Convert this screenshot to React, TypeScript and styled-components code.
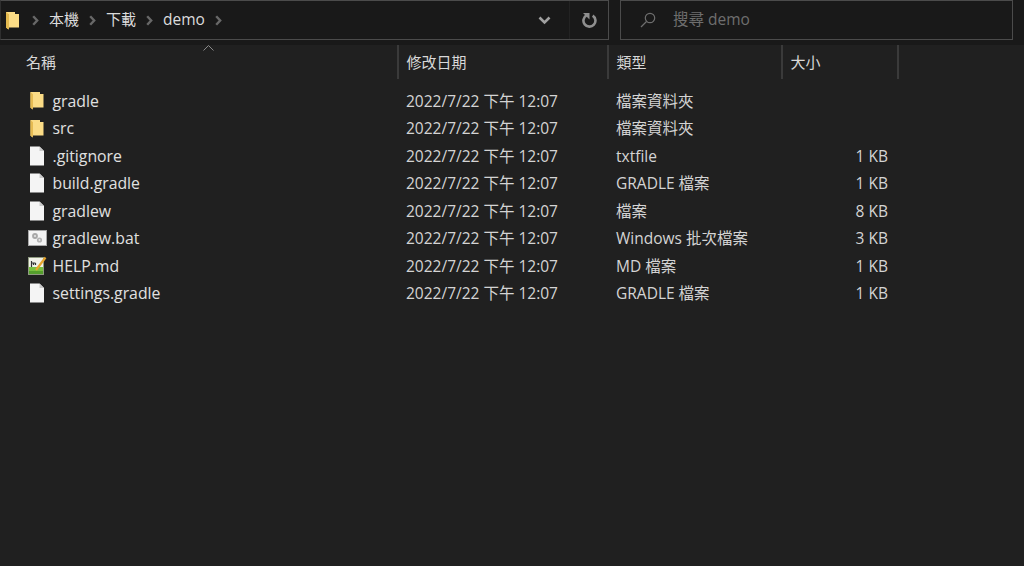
import styled, { createGlobalStyle } from 'styled-components';

const GlobalStyle = createGlobalStyle`
  html, body {
    margin: 0;
    padding: 0;
    height: 100%;
    background: #202020;
  }
  body {
    font-family: "Open Sans", "Noto Sans CJK TC", sans-serif;
    overflow: hidden;
  }
`;

const files = [
  { name: 'gradle', type: '檔案資料夾', size: '', icon: 'folder' },
  { name: 'src', type: '檔案資料夾', size: '', icon: 'folder' },
  { name: '.gitignore', type: 'txtfile', size: '1 KB', icon: 'file' },
  { name: 'build.gradle', type: 'GRADLE 檔案', size: '1 KB', icon: 'file' },
  { name: 'gradlew', type: '檔案', size: '8 KB', icon: 'file' },
  { name: 'gradlew.bat', type: 'Windows 批次檔案', size: '3 KB', icon: 'bat' },
  { name: 'HELP.md', type: 'MD 檔案', size: '1 KB', icon: 'md' },
  { name: 'settings.gradle', type: 'GRADLE 檔案', size: '1 KB', icon: 'file' },
];

function FolderIcon() {
  return (
    <svg width="14" height="19" viewBox="0 0 14 19">
      <path d="M.5 1h9.5v2h3.5v13.5H3l-.5 2L.5 16.5z" fill="#fbdc86" />
      <path d="M.5 1l2.5 2.2v13.3l-.5 2-2-2z" fill="#e6bb52" />
    </svg>
  );
}

function FileIcon() {
  return (
    <svg width="16" height="20" viewBox="0 0 16 20">
      <path d="M1 .5h9.5L15 5v14.5H1z" fill="#f4f4f4" />
      <path d="M10.5.5V5H15z" fill="#c9c9c9" />
    </svg>
  );
}

function BatIcon() {
  return (
    <svg width="19" height="16" viewBox="0 0 19 16">
      <rect x="0" y="0" width="19" height="16" fill="#a8a8a8" />
      <rect x="1" y="1" width="17" height="14" fill="#f4f4f4" />
      <circle cx="7" cy="6" r="2.9" fill="#a8a8a8" />
      <circle cx="7" cy="6" r="1" fill="#e8e8e8" />
      <circle cx="11.5" cy="10" r="2.6" fill="#b4b4b4" />
      <circle cx="11.5" cy="10" r=".9" fill="#e8e8e8" />
    </svg>
  );
}

function MdIcon() {
  return (
    <svg width="19" height="19" viewBox="0 0 19 19">
      <rect x="0" y="1" width="16" height="18" fill="#8f9a80" />
      <rect x="1" y="2" width="14" height="9" fill="#f1f1e8" />
      <rect x="1" y="11" width="14" height="7" fill="#78c040" />
      <rect x="1" y="15" width="14" height="3" fill="#549e2c" />
      <path d="M3.5 5v6M3.5 7h4M5.5 7v2M7.5 7v2" stroke="#333" strokeWidth="1.2" fill="none" />
      <path d="M8 14L17.5 1.5" stroke="#e8a52c" strokeWidth="2.2" />
    </svg>
  );
}

const icons = {
  folder: <FolderIcon />,
  file: <FileIcon />,
  bat: <BatIcon />,
  md: <MdIcon />,
};

function Chevron() {
  return (
    <svg width="7" height="11" viewBox="0 0 7 11">
      <path d="M1.2 1.2l4 4.3-4 4.3" stroke="#686868" strokeWidth="2.4" fill="none" />
    </svg>
  );
}

function App() {
  const rows = files.map(({ name, type, size, icon }) => (
    <Row key={name}>
      <NameCell>
        <IconSlot>{icons[icon]}</IconSlot>
        {name}
      </NameCell>
      <Cell>2022/7/22 下午 12:07</Cell>
      <TypeCell>{type}</TypeCell>
      <SizeCell>{size}</SizeCell>
    </Row>
  ));

  return (
    <>
      <GlobalStyle />
      <Toolbar>
        <AddressBar>
          <AddressFolder>
            <svg width="14" height="19" viewBox="0 0 14 19">
              <path d="M0 1h9v2h4v13.5H3l-.5 2L0 16.5z" fill="#fbdc86" />
              <path d="M0 1l3 2.2v13.3l-.5 2L0 16.5z" fill="#e3b94f" />
            </svg>
          </AddressFolder>
          <Crumbs>
            <Chevron />
            <Crumb>本機</Crumb>
            <Chevron />
            <Crumb>下載</Crumb>
            <Chevron />
            <Crumb $latin>demo</Crumb>
            <Chevron />
          </Crumbs>
          <DropButton>
            <svg width="13" height="9" viewBox="0 0 13 9">
              <path d="M1.5 1.5l5 5 5-5" stroke="#a0a0a0" strokeWidth="2.6" fill="none" />
            </svg>
          </DropButton>
          <RefreshButton>
            <svg width="16" height="16" viewBox="0 0 16 16">
              <path d="M5.5 3.4a6 6 0 1 0 6.2.2" stroke="#8f8f8f" strokeWidth="2.6" fill="none" />
              <path d="M2 1h6.5v6.5z" fill="#8f8f8f" />
            </svg>
          </RefreshButton>
        </AddressBar>
        <SearchBar>
          <svg width="16" height="16" viewBox="0 0 16 16">
            <circle cx="10" cy="6" r="4.7" stroke="#6e6e6e" strokeWidth="1.2" fill="none" />
            <path d="M6.5 9.5L1 15" stroke="#6e6e6e" strokeWidth="1.3" />
          </svg>
          <SearchText>搜尋 demo</SearchText>
        </SearchBar>
      </Toolbar>
      <HeaderRow>
        <SortCaret>
          <svg width="11" height="6" viewBox="0 0 11 6">
            <path d="M.5 5.5l5-5 5 5" stroke="#8a8a8a" strokeWidth="1" fill="none" />
          </svg>
        </SortCaret>
        <HeaderCell>名稱</HeaderCell>
        <HeaderCell $divider>修改日期</HeaderCell>
        <HeaderCell $divider>類型</HeaderCell>
        <HeaderCell $divider $end>大小</HeaderCell>
      </HeaderRow>
      <FileList>{rows}</FileList>
    </>
  );
}

export default App;

const Toolbar = styled.div`
  display: flex;
  gap: 11px;
  height: 45px;
  padding-right: 11px;
  box-sizing: border-box;
  background: #191919;
`;

const AddressBar = styled.div`
  display: flex;
  align-items: center;
  width: 609px;
  height: 40px;
  box-sizing: border-box;
  border: 1px solid #4b4b4b;
  border-left-color: #2e2e2e;
  background: #191919;
`;

const AddressFolder = styled.div`
  display: flex;
  margin-left: 5px;
  width: 14px;
`;

const Crumbs = styled.div`
  display: flex;
  align-items: center;
  flex: 1;
  margin-left: 12px;
  gap: 10px;
`;

const Crumb = styled.span<{ $latin?: boolean }>`
  color: #dcdcdc;
  font-size: ${props => (props.$latin ? '15.5px' : '15px')};
  line-height: 20px;
  margin-top: -2px;
`;

const DropButton = styled.div`
  display: flex;
  align-items: center;
  justify-content: center;
  width: 28px;
  height: 100%;
  margin-right: 11px;
`;

const RefreshButton = styled.div`
  display: flex;
  align-items: center;
  justify-content: center;
  width: 39px;
  height: 100%;
  box-sizing: border-box;
  border-left: 1px solid #232323;
`;

const SearchBar = styled.div`
  display: flex;
  align-items: center;
  flex: 1;
  height: 40px;
  padding-left: 19px;
  box-sizing: border-box;
  border: 1px solid #4b4b4b;
  background: #191919;
`;

const SearchText = styled.span`
  margin-left: 17px;
  margin-top: -3px;
  color: #6e6e6e;
  font-size: 15.5px;
  line-height: 20px;
`;

const HeaderRow = styled.div`
  position: relative;
  display: grid;
  grid-template-columns: 397px 210px 174px 118px;
  height: 34px;
  background: #202020;
`;

const SortCaret = styled.div`
  position: absolute;
  left: 203px;
  top: 0;
  line-height: 0;
`;

const HeaderCell = styled.div<{ $divider?: boolean; $end?: boolean }>`
  display: flex;
  align-items: center;
  height: 34px;
  box-sizing: border-box;
  padding: 0 0 1px ${props => (props.$divider ? '7.5px' : '26px')};
  border-left: ${props => (props.$divider ? '2px solid #3a3a3a' : 'none')};
  border-right: ${props => (props.$end ? '2px solid #3a3a3a' : 'none')};
  color: #d8d8d8;
  font-size: 15px;
  line-height: 20px;
`;

const FileList = styled.div`
  display: grid;
  grid-auto-rows: 27.5px;
  padding-top: 8px;
`;

const Row = styled.div`
  display: grid;
  grid-template-columns: 406px 210px 173px 99px;
  align-items: center;
  color: #e0e0e0;
  font-size: 15.8px;
  line-height: 20px;
  white-space: nowrap;
`;

const Cell = styled.div`
  font-size: 15.5px;
  color: #d4d4d4;
  margin-top: -0.5px;
`;

const NameCell = styled.div`
  display: flex;
  align-items: center;
`;

const IconSlot = styled.div`
  display: flex;
  align-items: center;
  justify-content: center;
  width: 20px;
  height: 20px;
  margin-left: 27px;
  margin-right: 5.5px;
`;

const TypeCell = styled(Cell)``;

const SizeCell = styled(Cell)`
  text-align: right;
`;
